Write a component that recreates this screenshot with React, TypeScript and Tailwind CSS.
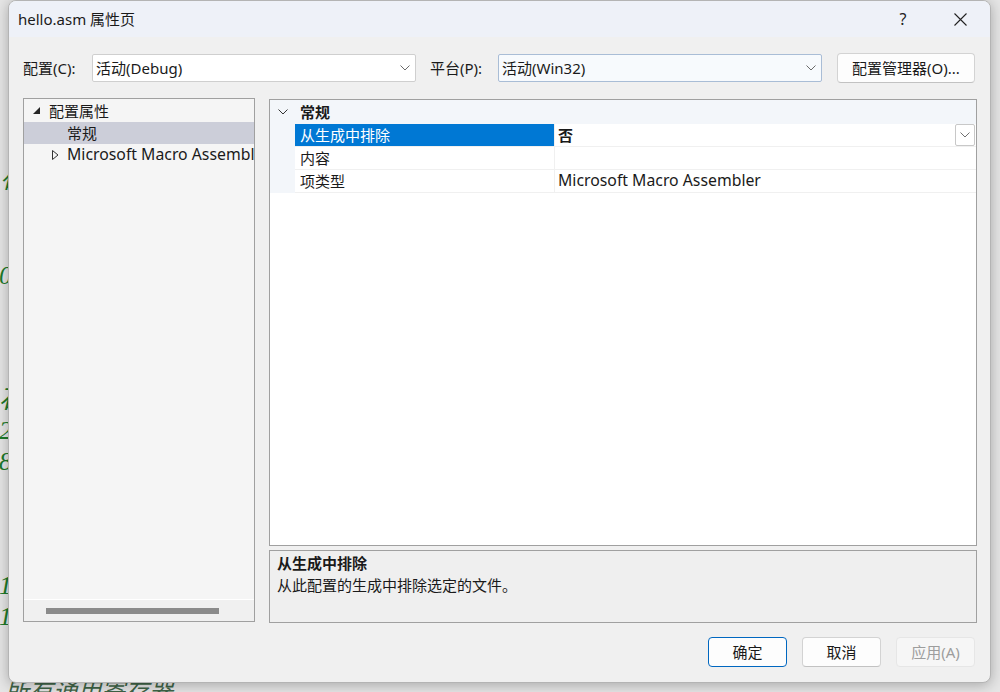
import React from 'react';

const Chevron = ({ className = '' }: { className?: string }) => (
  <svg width="10" height="6" viewBox="0 0 10 6" className={className}>
    <path d="M0.5 0.5 L5 5 L9.5 0.5" fill="none" stroke="currentColor" strokeWidth="1" />
  </svg>
);

// editor lines peeking out behind the dialog
const bgLines: string[] = [
  '句柄', '', '', '0x00', '', '', '', '石', '2', '8', '', '', '', '1', '1', '',
];

export default function App() {
  return (
    <div className="relative w-[1000px] h-[692px] overflow-hidden bg-[#e6e6e6] font-['Noto_Sans','Noto_Sans_CJK_SC',sans-serif] text-[15px] text-[#1a1a1a]">
      {/* EDITOR BEHIND */}
      <div className="pt-[167px] -ml-[1px] font-['Liberation_Serif','Noto_Sans_CJK_SC',serif] italic text-[26px] text-[#1d7a2a]">
        {bgLines.map((l, i) => (
          <div key={i} className="h-[31px] leading-[31px] whitespace-nowrap">{l}</div>
        ))}
        <div className="mt-[14px] ml-[6px] h-[31px] leading-[31px] whitespace-nowrap text-[24px] text-[#3f6447]">所有通用寄存器</div>
      </div>

      {/* DIALOG */}
      <div className="absolute left-[8px] top-0 w-[983px] h-[683px] flex flex-col bg-[#f0f0f0] border border-[#b4b4b4] rounded-[8px] overflow-hidden shadow-[0_2px_14px_rgba(0,0,0,0.28)]">
        {/* title bar */}
        <div className="h-[36px] shrink-0 flex items-center bg-[#eef1f8] pl-[9px] pr-[7px]">
          <span className="flex-1 leading-none">hello.asm 属性页</span>
          <div className="w-[46px] h-[36px] mr-[11px] flex items-center justify-center text-[16px] text-[#222]">?</div>
          <div className="w-[46px] h-[36px] flex items-center justify-center text-[#222]">
            <svg width="13" height="13" viewBox="0 0 13 13">
              <path d="M0.5 0.5 L12.5 12.5 M12.5 0.5 L0.5 12.5" stroke="currentColor" strokeWidth="1.1" fill="none" />
            </svg>
          </div>
        </div>

        <div className="flex-1 flex flex-col pl-[14px] pr-[13px]">
          {/* configuration row */}
          <div className="mt-[16px] h-[30px] flex items-center">
            <span className="w-[69px] shrink-0">配置(C):</span>
            <div className="w-[324px] h-[28px] flex items-center justify-between bg-white border border-[#cfcfcf] rounded-[2px] pl-[3px] pr-[5px]">
              <span>活动(Debug)</span>
              <Chevron className="text-[#6a6a6a]" />
            </div>
            <span className="ml-[14px] w-[68px] shrink-0">平台(P):</span>
            <div className="w-[324px] h-[28px] flex items-center justify-between bg-[#f7fafd] border border-[#a9bdd6] rounded-[2px] pl-[3px] pr-[5px]">
              <span>活动(Win32)</span>
              <Chevron className="text-[#6a6a6a]" />
            </div>
            <div className="ml-[15px] w-[138px] h-[30px] flex items-center justify-center bg-[#fdfdfd] border border-[#d3d3d3] border-b-[#c2c2c2] rounded-[4px]">
              配置管理器(O)...
            </div>
          </div>

          {/* main area */}
          <div className="mt-[15px] h-[526px] flex">
            {/* tree */}
            <div className="w-[232px] h-[524px] shrink-0 flex flex-col bg-[#f5f5f5] border border-[#a0a0a0]">
              <div className="flex-1 pt-[1px] overflow-hidden">
                <div className="h-[22px] flex items-center whitespace-nowrap">
                  <svg width="8" height="8" viewBox="0 0 8 8" className="ml-[9px] mr-[8px] shrink-0">
                    <path d="M7 0 L7 7 L0 7 Z" fill="#262626" />
                  </svg>
                  <span>配置属性</span>
                </div>
                <div className="h-[22px] flex items-center whitespace-nowrap bg-[#ccced9] pl-[43px]">常规</div>
                <div className="h-[22px] flex items-center whitespace-nowrap">
                  <svg width="7" height="10" viewBox="0 0 7 10" className="ml-[28px] mr-[8px] shrink-0">
                    <path d="M0.5 0.5 L6 5 L0.5 9.5 Z" fill="none" stroke="#333" strokeWidth="1" />
                  </svg>
                  <span className="text-[15.8px]">Microsoft Macro Assembler</span>
                </div>
              </div>
              <div className="h-[22px] shrink-0 flex items-center border-t border-white bg-[#f0f0f0]">
                <div className="ml-[22px] w-[173px] h-[6px] bg-[#8b8b8b]" />
              </div>
            </div>

            {/* property grid + description */}
            <div className="ml-[14px] w-[708px] flex flex-col">
              <div className="mt-[1px] h-[447px] bg-white border border-[#a0a0a0] flex flex-col">
                <div className="h-[24px] flex items-center bg-[#f3f6fa]">
                  <Chevron className="ml-[8px] mr-[12px] text-[#333]" />
                  <span className="font-bold">常规</span>
                </div>
                {[
                  { k: '从生成中排除', v: '否', sel: true },
                  { k: '内容', v: '', sel: false },
                  { k: '项类型', v: 'Microsoft Macro Assembler', sel: false },
                ].map(row => (
                  <div key={row.k} className="h-[23px] flex">
                    <div className="w-[25px] shrink-0 bg-[#f3f6fa]" />
                    <div className={`w-[259px] shrink-0 flex items-center pl-[5px] border-b border-[#f0f0f0] ${row.sel ? 'bg-[#0078d4] text-white' : ''}`}>
                      {row.k}
                    </div>
                    <div className="flex-1 flex items-center justify-between pl-[3px] border-l border-b border-[#f0f0f0]">
                      <span className={row.sel ? 'font-bold' : 'text-[15.8px]'}>{row.v}</span>
                      {row.sel && (
                        <div className="w-[20px] h-[22px] mr-[1px] flex items-center justify-center bg-white border border-[#c8c8c8] rounded-[2px]">
                          <Chevron className="text-[#707070]" />
                        </div>
                      )}
                    </div>
                  </div>
                ))}
              </div>
              <div className="mt-[4px] h-[73px] bg-[#efefef] border border-[#a0a0a0] pl-[7px] pt-[1px]">
                <div className="font-bold leading-[22px]">从生成中排除</div>
                <div className="leading-[22px]">从此配置的生成中排除选定的文件。</div>
              </div>
            </div>
          </div>

          {/* buttons */}
          <div className="mt-[13px] mr-[2px] flex justify-end gap-[15px]">
            <div className="w-[79px] h-[30px] flex items-center justify-center bg-[#fdfdfd] border border-[#0067c0] rounded-[4px]">确定</div>
            <div className="w-[79px] h-[30px] flex items-center justify-center bg-[#fdfdfd] border border-[#d3d3d3] border-b-[#c2c2c2] rounded-[4px]">取消</div>
            <div className="w-[79px] h-[30px] flex items-center justify-center bg-[#f6f6f6] border border-[#e6e6e6] rounded-[4px] text-[#9d9d9d]">应用(A)</div>
          </div>
        </div>
      </div>
    </div>
  );
}
